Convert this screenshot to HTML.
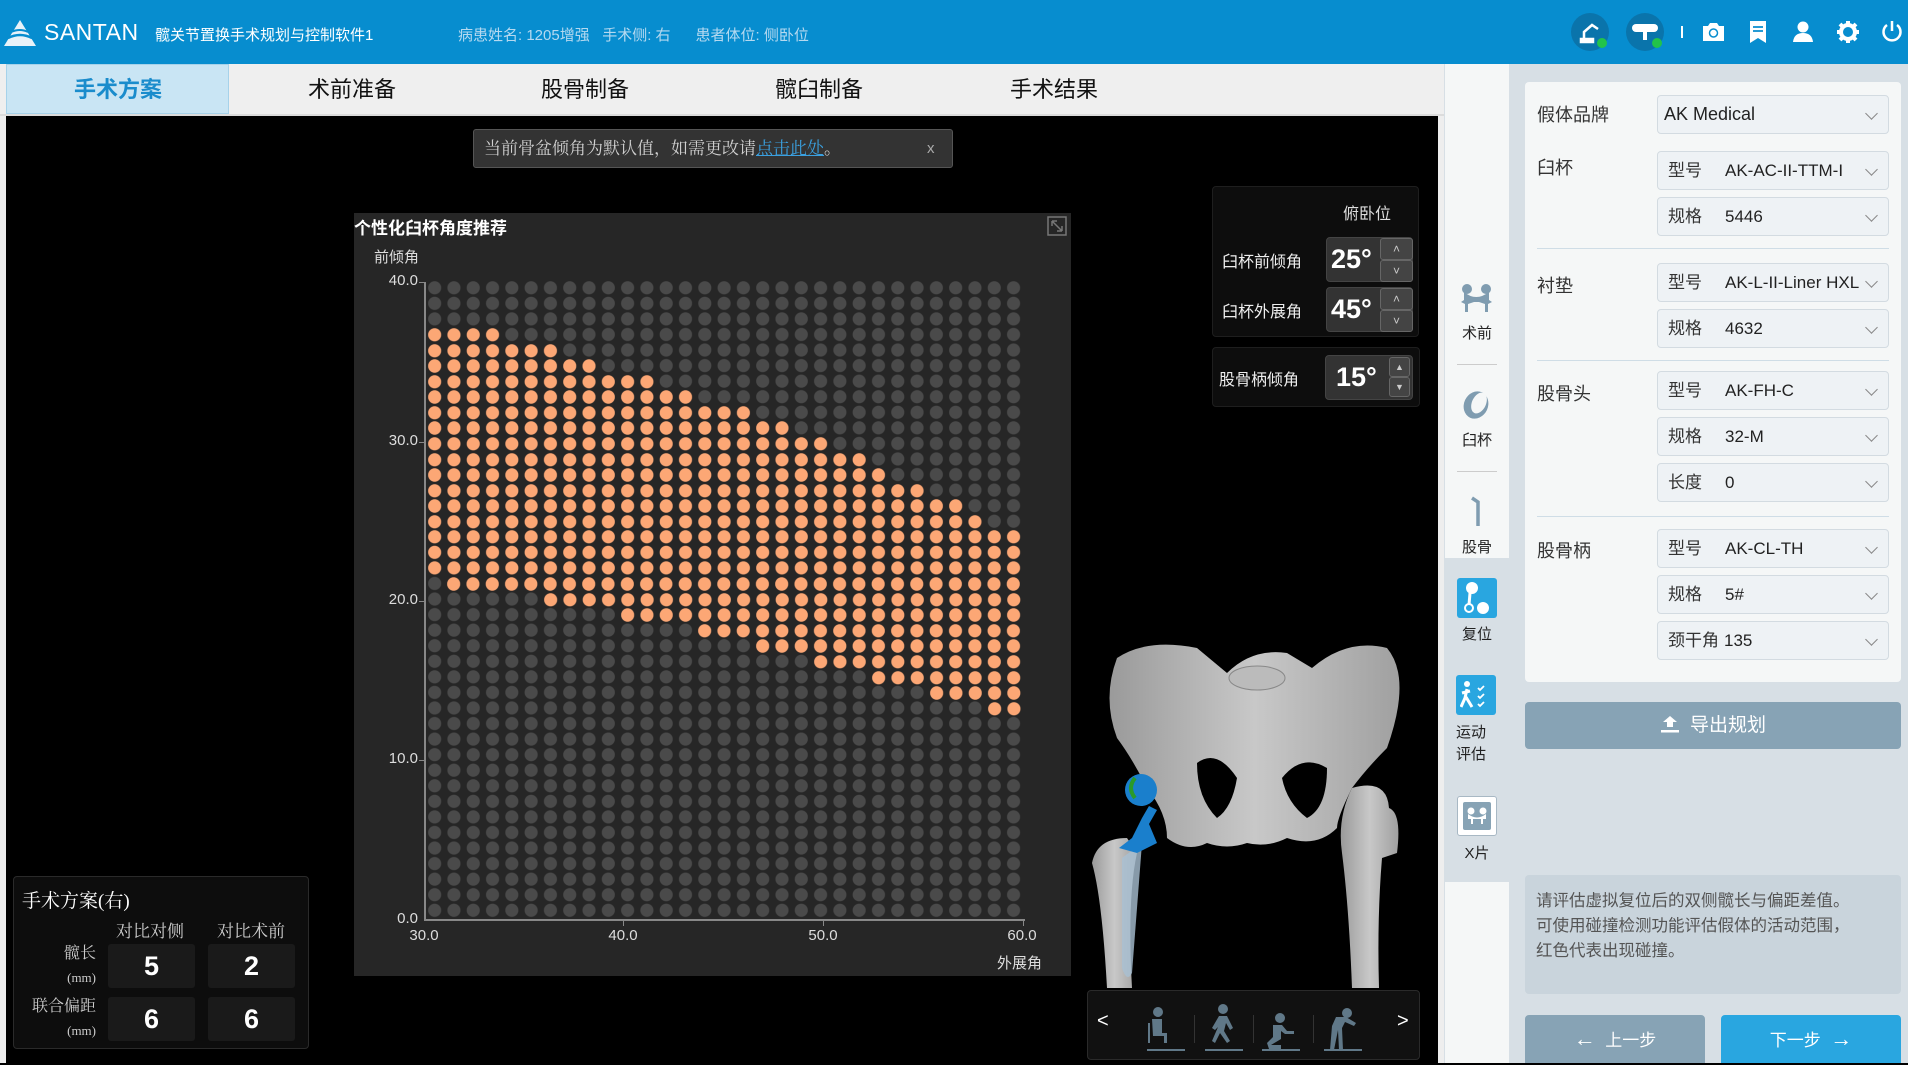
<!DOCTYPE html>
<html><head><meta charset="utf-8">
<style>
*{margin:0;padding:0;box-sizing:border-box}
body{width:1908px;height:1063px;overflow:hidden;position:relative;background:#000;font-family:"Liberation Sans","Noto Sans CJK SC",sans-serif}
.a{position:absolute}
.hdr{left:0;top:0;width:1908px;height:64px;background:#078dcf}
.tabs{left:0;top:64px;width:1444px;height:52px;background:#efefef;border-bottom:2px solid #dcdcdc}
.tab{position:absolute;top:0;height:50px;line-height:50px;font-size:22px;color:#111;text-align:center;width:230px}
.dd{position:absolute;left:1657px;width:232px;height:39px;background:#eef2f5;border:1px solid #d3dbe1;border-radius:4px;font-size:17px;color:#222;line-height:37px}
.dd .p{position:absolute;left:10px;color:#333}
.dd .v{position:absolute;left:67px}
.dd .c{position:absolute;right:12px;top:13px;width:9px;height:9px;border-right:1.5px solid #888;border-bottom:1.5px solid #888;transform:rotate(45deg)}
.lab{position:absolute;left:1537px;font-size:18px;color:#333}
.hr{position:absolute;left:1537px;width:352px;height:1px;background:#cfdde6}
.ylab{position:absolute;width:50px;text-align:right;font-size:15px;color:#ddd}
.xlab{position:absolute;width:50px;text-align:center;font-size:15px;color:#ddd}
.or{position:absolute;background:radial-gradient(circle at 50% 50%,#fca775 6.2px,#262626 6.9px);background-size:19.31px 15.57px}
.sl{position:absolute;left:1445px;width:64px;text-align:center;font-size:15px;color:#222}
.box{position:absolute;background:#333;border:1px solid #444;border-radius:4px;color:#fff;font-weight:bold;font-size:27px}
.st{position:absolute;background:#444;border:1px solid #666;border-radius:3px;color:#ccc;font-size:12px;text-align:center}
.cell{position:absolute;width:87px;height:44px;background:#1a1a1a;border-radius:3px;color:#fff;font-weight:bold;font-size:27px;text-align:center;line-height:44px}
.serif{font-family:"Liberation Serif","Noto Serif CJK SC",serif}
</style></head><body>
<!-- header -->
<div class="a hdr"></div>
<svg class="a" style="left:4px;top:20px" width="32" height="26" viewBox="0 0 32 26"><polygon points="16,0 32,26 0,26" fill="#e8f2f9"/><path d="M4 18 Q16 12 28 18" stroke="#078dcf" stroke-width="2.5" fill="none"/><path d="M7 12 Q16 8 24 12" stroke="#078dcf" stroke-width="2" fill="none"/></svg>
<div class="a" style="left:44px;top:19px;font-size:23px;color:#fff;letter-spacing:0.5px">SANTAN</div>
<div class="a" style="left:155px;top:24px;font-size:15px;color:#fff">髋关节置换手术规划与控制软件1</div>
<div class="a" style="left:458px;top:24px;font-size:15px;color:#b5d9f0;white-space:pre">病患姓名: 1205增强   手术侧: 右      患者体位: 侧卧位</div>
<div class="a" style="left:1571px;top:13px;width:38px;height:38px;border-radius:50%;background:#0a74ab"></div>
<svg class="a" style="left:1578px;top:20px" width="24" height="24" viewBox="0 0 24 24" fill="none" stroke="#fff" stroke-width="2.5"><path d="M6 20 L6 12 L14 5 L20 9"/><rect x="3" y="19" width="12" height="3" fill="#fff"/></svg>
<div class="a" style="left:1597px;top:38px;width:10px;height:10px;border-radius:50%;background:#22c34a"></div>
<div class="a" style="left:1626px;top:13px;width:38px;height:38px;border-radius:50%;background:#0a74ab"></div>
<div class="a" style="left:1632px;top:24px;width:26px;height:8px;border-radius:4px;background:#fff"></div>
<div class="a" style="left:1643px;top:31px;width:4px;height:9px;background:#fff"></div>
<div class="a" style="left:1652px;top:38px;width:10px;height:10px;border-radius:50%;background:#22c34a"></div>
<div class="a" style="left:1681px;top:26px;width:2px;height:12px;background:#fff"></div>
<svg class="a" style="left:1703px;top:22px" width="21" height="19" viewBox="0 0 21 19"><path d="M0 4 H5 L7 1 H14 L16 4 H21 V19 H0Z" fill="#fff"/><circle cx="10.5" cy="11" r="4" fill="none" stroke="#078dcf" stroke-width="1.5"/></svg>
<svg class="a" style="left:1750px;top:21px" width="16" height="22" viewBox="0 0 16 22"><path d="M0 0H16V22L8 17L0 22Z" fill="#fff"/><path d="M3 6H13M3 10H13" stroke="#078dcf" stroke-width="1.8"/></svg>
<svg class="a" style="left:1793px;top:21px" width="20" height="21" viewBox="0 0 20 21"><circle cx="10" cy="6" r="5.5" fill="#fff"/><path d="M0 21 Q1 12 10 12 Q19 12 20 21Z" fill="#fff"/></svg>
<svg class="a" style="left:1837px;top:21px" width="22" height="22" viewBox="0 0 22 22"><circle cx="11" cy="11" r="7" fill="none" stroke="#fff" stroke-width="4"/><g stroke="#fff" stroke-width="4"><path d="M11 0V5M11 17V22M0 11H5M17 11H22M3 3L6.5 6.5M15.5 15.5L19 19M3 19L6.5 15.5M15.5 6.5L19 3"/></g></svg>
<svg class="a" style="left:1881px;top:20px" width="22" height="23" viewBox="0 0 22 23"><path d="M6 5 A8.5 8.5 0 1 0 16 5" fill="none" stroke="#fff" stroke-width="2.5"/><path d="M11 1V11" stroke="#fff" stroke-width="2.5"/></svg>

<!-- tabs -->
<div class="a tabs"></div>
<div class="a" style="left:6px;top:64px;width:223px;height:50px;background:#c9e5f4;border:1px solid #a6d2ea"></div>
<div class="tab" style="left:3px;top:65px;color:#1a8ccc;font-weight:bold">手术方案</div>
<div class="tab" style="left:237px;top:65px">术前准备</div>
<div class="tab" style="left:470px;top:65px">股骨制备</div>
<div class="tab" style="left:704px;top:65px">髋臼制备</div>
<div class="tab" style="left:939px;top:65px">手术结果</div>
<div class="a" style="left:0;top:116px;width:6px;height:947px;background:#eeeeee"></div>
<div class="a" style="left:1438px;top:116px;width:6px;height:947px;background:#eeeeee"></div>

<!-- notification -->
<div class="a serif" style="left:473px;top:129px;width:480px;height:39px;background:#333;border:1px solid #555;border-radius:3px;font-size:17px;color:#d0d0d0;line-height:37px;padding-left:10px">当前骨盆倾角为默认值，如需更改请<span style="color:#3aa0e0;text-decoration:underline">点击此处</span>。<span style="position:absolute;left:453px;color:#aaa;font-family:'Liberation Sans';font-size:15px">x</span></div>

<!-- chart -->
<div class="a" style="left:354px;top:213px;width:717px;height:763px;background:#262626"></div>
<div class="a" style="left:354px;top:214px;font-size:17px;font-weight:bold;color:#fff">个性化臼杯角度推荐</div>
<svg class="a" style="left:1047px;top:216px" width="20" height="20" viewBox="0 0 20 20" fill="none" stroke="#777" stroke-width="1.5"><rect x="1" y="1" width="18" height="18"/><path d="M5 5L15 15M5 5H10M5 5V10M15 15H10M15 15V10"/></svg>
<div class="a" style="left:374px;top:246px;font-size:15px;color:#ddd">前倾角</div>
<div class="a" style="left:425px;top:280.2px;width:598.6px;height:638.4px;background:radial-gradient(circle at 50% 50%,#4a4a4a 6.2px,#262626 6.9px);background-size:19.31px 15.57px"></div>
<div class="or" style="left:425px;top:326.9px;width:77.2px;height:15.57px"></div>
<div class="or" style="left:425px;top:342.5px;width:135.2px;height:15.57px"></div>
<div class="or" style="left:425px;top:358.1px;width:173.8px;height:15.57px"></div>
<div class="or" style="left:425px;top:373.6px;width:231.7px;height:15.57px"></div>
<div class="or" style="left:425px;top:389.2px;width:270.3px;height:15.57px"></div>
<div class="or" style="left:425px;top:404.8px;width:328.3px;height:15.57px"></div>
<div class="or" style="left:425px;top:420.3px;width:366.9px;height:15.57px"></div>
<div class="or" style="left:425px;top:435.9px;width:405.5px;height:15.57px"></div>
<div class="or" style="left:425px;top:451.5px;width:444.1px;height:15.57px"></div>
<div class="or" style="left:425px;top:467.0px;width:463.4px;height:15.57px"></div>
<div class="or" style="left:425px;top:482.6px;width:502.1px;height:15.57px"></div>
<div class="or" style="left:425px;top:498.2px;width:540.7px;height:15.57px"></div>
<div class="or" style="left:425px;top:513.8px;width:560px;height:15.57px"></div>
<div class="or" style="left:425px;top:529.3px;width:598.6px;height:46.71px"></div>
<div class="or" style="left:444.31px;top:576.0px;width:579.3px;height:15.57px"></div>
<div class="or" style="left:540.86px;top:591.6px;width:482.8px;height:15.57px"></div>
<div class="or" style="left:618.1px;top:607.2px;width:405.5px;height:15.57px"></div>
<div class="or" style="left:695.34px;top:622.7px;width:328.3px;height:15.57px"></div>
<div class="or" style="left:753.27px;top:638.3px;width:270.3px;height:15.57px"></div>
<div class="or" style="left:811.2px;top:653.9px;width:212.4px;height:15.57px"></div>
<div class="or" style="left:869.13px;top:669.5px;width:154.5px;height:15.57px"></div>
<div class="or" style="left:927.06px;top:685.0px;width:96.6px;height:15.57px"></div>
<div class="or" style="left:984.99px;top:700.6px;width:38.6px;height:15.57px"></div>
<div class="a" style="left:424px;top:282px;width:2px;height:639px;background:#888"></div>
<div class="a" style="left:424px;top:919px;width:601px;height:2px;background:#888"></div>
<div class="a" style="left:419px;top:282px;width:5px;height:1px;background:#888"></div>
<div class="a" style="left:419px;top:442px;width:5px;height:1px;background:#888"></div>
<div class="a" style="left:419px;top:601px;width:5px;height:1px;background:#888"></div>
<div class="a" style="left:419px;top:760px;width:5px;height:1px;background:#888"></div>
<div class="a" style="left:623px;top:921px;width:1px;height:5px;background:#888"></div>
<div class="a" style="left:823px;top:921px;width:1px;height:5px;background:#888"></div>
<div class="a" style="left:1023px;top:921px;width:1px;height:5px;background:#888"></div>
<div class="ylab" style="left:368px;top:272px">40.0</div>
<div class="ylab" style="left:368px;top:432px">30.0</div>
<div class="ylab" style="left:368px;top:591px">20.0</div>
<div class="ylab" style="left:368px;top:750px">10.0</div>
<div class="ylab" style="left:368px;top:910px">0.0</div>
<div class="xlab" style="left:399px;top:927px">30.0</div>
<div class="xlab" style="left:598px;top:927px">40.0</div>
<div class="xlab" style="left:798px;top:927px">50.0</div>
<div class="xlab" style="left:997px;top:927px">60.0</div>
<div class="a" style="left:997px;top:952px;font-size:15px;color:#ddd">外展角</div>

<!-- angle panels -->
<div class="a" style="left:1212px;top:186px;width:207px;height:151px;background:#0d0d0d;border:1px solid #1e1e1e;border-radius:4px"></div>
<div class="a" style="left:1343px;top:200px;font-size:16px;color:#ddd">俯卧位</div>
<div class="a" style="left:1222px;top:248px;font-size:16px;color:#eee">臼杯前倾角</div>
<div class="box" style="left:1326px;top:237px;width:87px;height:45px;line-height:43px;padding-left:4px">25°</div>
<div class="st" style="left:1380px;top:238px;width:33px;height:22px;line-height:20px">˄</div>
<div class="st" style="left:1380px;top:260px;width:33px;height:22px;line-height:20px">˅</div>
<div class="a" style="left:1222px;top:298px;font-size:16px;color:#eee">臼杯外展角</div>
<div class="box" style="left:1326px;top:287px;width:87px;height:45px;line-height:43px;padding-left:4px">45°</div>
<div class="st" style="left:1380px;top:288px;width:33px;height:22px;line-height:20px">˄</div>
<div class="st" style="left:1380px;top:310px;width:33px;height:22px;line-height:20px">˅</div>
<div class="a" style="left:1212px;top:347px;width:208px;height:60px;background:#0d0d0d;border:1px solid #1e1e1e;border-radius:4px"></div>
<div class="a" style="left:1219px;top:366px;font-size:16px;color:#eee">股骨柄倾角</div>
<div class="box" style="left:1325px;top:355px;width:88px;height:45px;line-height:43px;padding-left:10px">15°</div>
<div class="st" style="left:1389px;top:357px;width:21px;height:20px;line-height:18px;font-size:9px">▲</div>
<div class="st" style="left:1389px;top:377px;width:21px;height:20px;line-height:18px;font-size:9px">▼</div>

<!-- pelvis -->
<svg class="a" style="left:1087px;top:638px" width="330" height="352" viewBox="0 0 330 352">
<defs><linearGradient id="g" x1="0" x2="1"><stop offset="0" stop-color="#9a9a9a"/><stop offset=".5" stop-color="#c8c8c8"/><stop offset="1" stop-color="#a0a0a0"/></linearGradient></defs>
<g fill="url(#g)">
<path d="M30 20 Q60 0 110 10 L140 35 Q165 10 200 15 L225 30 Q260 0 300 10 Q325 40 300 110 Q280 130 265 150 Q250 180 250 190 Q230 210 200 200 Q180 210 160 205 Q140 212 120 205 Q100 215 80 200 Q80 175 60 150 Q45 120 30 100 Q15 60 30 20Z"/>
<path d="M5 225 Q10 200 40 200 L50 215 Q40 260 45 350 L20 350 Q15 260 5 225Z"/>
<path d="M265 150 Q300 140 302 170 Q315 175 310 215 L295 220 Q290 280 292 350 L265 350 Q262 270 255 215 Q250 180 265 150Z"/>
</g>
<ellipse cx="170" cy="40" rx="28" ry="12" fill="#bbb" stroke="#888"/>
<path d="M110 125 Q130 110 150 140 Q145 170 130 180 Q110 160 110 125Z" fill="#000"/>
<path d="M195 140 Q215 115 240 130 Q240 170 220 180 Q200 165 195 140Z" fill="#000"/>
<path d="M35 220 L55 205 L45 335 Q40 345 35 330Z" fill="#a9c1d3" opacity=".8"/>
<circle cx="54" cy="152" r="16" fill="#1a7fcc"/>
<path d="M32 210 L45 200 L55 180 L62 168 L70 172 L62 186 L70 205 L50 215Z" fill="#1a7fcc"/>
<path d="M48 140 Q40 150 48 160" stroke="#2a9a2a" stroke-width="4" fill="none"/>
</svg>
<div class="a" style="left:1087px;top:990px;width:333px;height:70px;background:#111;border:1px solid #2a2a2a;border-radius:4px"></div>
<div class="a" style="left:1097px;top:1010px;color:#fff;font-size:20px">&lt;</div>
<div class="a" style="left:1397px;top:1010px;color:#fff;font-size:20px">&gt;</div>
<svg class="a" style="left:1130px;top:1003px" width="260" height="50" viewBox="0 0 260 50" fill="#607888">
<circle cx="28" cy="9" r="5"/><path d="M22 16h10v14h5v10h-3v-7h-11z"/><rect x="17" y="46" width="38" height="2"/><rect x="18" y="20" width="2" height="20"/>
<circle cx="93" cy="6" r="5"/><path d="M89 13l8 0 6 12-3 2-4-7-2 8 6 10-3 2-7-10-5 10-3-2 6-14-3 3-3-2z"/><rect x="75" y="46" width="38" height="2"/>
<circle cx="150" cy="15" r="5"/><path d="M143 22h9l5 6h7v3h-9l-4-3 0 8-10 6h10v4h-12l-2-6 6-6z"/><rect x="132" y="46" width="38" height="2"/>
<circle cx="217" cy="10" r="5"/><path d="M206 14h10l10 6-2 3-9-4-3 6 1 22h-4l-1-20-4 20h-4l2-24z"/><rect x="194" y="46" width="38" height="2"/>
<rect x="64" y="12" width="1" height="28" fill="#333"/><rect x="123" y="12" width="1" height="28" fill="#333"/><rect x="183" y="12" width="1" height="28" fill="#333"/>
</svg>

<!-- plan panel -->
<div class="a" style="left:13px;top:876px;width:296px;height:173px;background:#0d0d0d;border:1px solid #2a2a2a;border-radius:4px"></div>
<div class="a serif" style="left:22px;top:886px;font-size:19px;color:#fff">手术方案(右)</div>
<div class="a serif" style="left:116px;top:917px;font-size:17px;color:#ccc">对比对侧</div>
<div class="a serif" style="left:217px;top:917px;font-size:17px;color:#ccc">对比术前</div>
<div class="a serif" style="left:40px;top:942px;width:56px;text-align:right;font-size:16px;color:#ccc;line-height:24px">髋长<br><span style="font-size:13px">(mm)</span></div>
<div class="a serif" style="left:20px;top:995px;width:76px;text-align:right;font-size:16px;color:#ccc;line-height:24px">联合偏距<br><span style="font-size:13px">(mm)</span></div>
<div class="cell" style="left:108px;top:944px">5</div>
<div class="cell" style="left:208px;top:944px">2</div>
<div class="cell" style="left:108px;top:997px">6</div>
<div class="cell" style="left:208px;top:997px">6</div>

<!-- sidebar -->
<div class="a" style="left:1444px;top:64px;width:464px;height:999px;background:#d7dfe5"></div>
<div class="a" style="left:1445px;top:64px;width:64px;height:494px;background:#f5f7f7"></div>
<div class="a" style="left:1445px;top:882px;width:64px;height:181px;background:#f5f7f7"></div>
<svg class="a" style="left:1461px;top:284px" width="31" height="28" viewBox="0 0 31 28" fill="#7f9cb0"><circle cx="6" cy="5" r="5"/><circle cx="25" cy="5" r="5"/><path d="M3 8 Q15 18 28 8 L28 16 L31 18 L27 20 L27 28 L24 28 L24 20 L18 18 L13 18 L7 20 L7 28 L4 28 L4 20 L0 18 L3 16Z"/></svg>
<div class="sl" style="top:322px">术前</div>
<div class="a" style="left:1457px;top:364px;width:40px;height:1px;background:#ccc"></div>
<svg class="a" style="left:1462px;top:390px" width="28" height="30" viewBox="0 0 28 30"><ellipse cx="14" cy="15" rx="12" ry="14" fill="#7f9cb0" transform="rotate(25 14 15)"/><ellipse cx="17" cy="13" rx="7" ry="11" fill="#f5f7f7" transform="rotate(25 17 13)"/></svg>
<div class="sl" style="top:429px">臼杯</div>
<div class="a" style="left:1457px;top:471px;width:40px;height:1px;background:#ccc"></div>
<svg class="a" style="left:1470px;top:496px" width="14" height="32" viewBox="0 0 14 32"><path d="M2 2 L8 6 L8 30" stroke="#7f9cb0" stroke-width="3.5" fill="none"/></svg>
<div class="sl" style="top:536px">股骨</div>
<div class="a" style="left:1457px;top:578px;width:40px;height:40px;background:#29a6e0;border-radius:3px"></div>
<svg class="a" style="left:1461px;top:581px" width="32" height="34" viewBox="0 0 32 34" fill="#fff"><circle cx="11" cy="7" r="6"/><path d="M9 12 L8 24" stroke="#fff" stroke-width="3"/><circle cx="8" cy="27" r="4" fill="none" stroke="#fff" stroke-width="2"/><circle cx="22" cy="27" r="6"/></svg>
<div class="sl" style="top:623px">复位</div>
<div class="a" style="left:1456px;top:675px;width:40px;height:40px;background:#29a6e0;border-radius:3px"></div>
<svg class="a" style="left:1460px;top:680px" width="32" height="30" viewBox="0 0 32 30" fill="none" stroke="#fff" stroke-width="3"><circle cx="7" cy="4" r="3" fill="#fff" stroke="none"/><path d="M7 9 L5 18 L1 27 M6 17 L12 27 M2 13 L10 11"/><path d="M18 8l2 2 4-4M18 16l2 2 4-4M18 24l2 2 4-4" stroke-width="1.8"/></svg>
<div class="a" style="left:1456px;top:722px;font-size:15px;color:#222;line-height:22px">运动<br>评估</div>
<div class="a" style="left:1457px;top:796px;width:40px;height:40px;background:#fff;border:1px solid #a8b8c4;border-radius:3px"></div>
<div class="a" style="left:1463px;top:802px;width:28px;height:28px;background:#87a3b5;border-radius:2px"></div>
<svg class="a" style="left:1466px;top:806px" width="22" height="20" viewBox="0 0 22 20" fill="#fff"><circle cx="5" cy="5" r="3.5"/><circle cx="17" cy="5" r="3.5"/><path d="M2 8 Q11 15 20 8 L20 13 L17 13 L17 18 L15 18 L15 13 L7 13 L7 18 L5 18 L5 13 L2 13Z"/></svg>
<div class="sl" style="top:842px">X片</div>

<!-- right card -->
<div class="a" style="left:1525px;top:82px;width:376px;height:600px;background:#f5f7f7;border-radius:4px"></div>
<div class="lab" style="top:101px">假体品牌</div>
<div class="dd" style="top:95px"><span class="p" style="left:6px;font-size:18px;color:#222">AK Medical</span><span class="c"></span></div>
<div class="lab" style="top:154px">臼杯</div>
<div class="dd" style="top:151px"><span class="p">型号</span><span class="v">AK-AC-II-TTM-I</span><span class="c"></span></div>
<div class="dd" style="top:197px"><span class="p">规格</span><span class="v">5446</span><span class="c"></span></div>
<div class="hr" style="top:248px"></div>
<div class="lab" style="top:272px">衬垫</div>
<div class="dd" style="top:263px"><span class="p">型号</span><span class="v">AK-L-II-Liner HXL</span><span class="c"></span></div>
<div class="dd" style="top:309px"><span class="p">规格</span><span class="v">4632</span><span class="c"></span></div>
<div class="hr" style="top:360px"></div>
<div class="lab" style="top:380px">股骨头</div>
<div class="dd" style="top:371px"><span class="p">型号</span><span class="v">AK-FH-C</span><span class="c"></span></div>
<div class="dd" style="top:417px"><span class="p">规格</span><span class="v">32-M</span><span class="c"></span></div>
<div class="dd" style="top:463px"><span class="p">长度</span><span class="v">0</span><span class="c"></span></div>
<div class="hr" style="top:516px"></div>
<div class="lab" style="top:537px">股骨柄</div>
<div class="dd" style="top:529px"><span class="p">型号</span><span class="v">AK-CL-TH</span><span class="c"></span></div>
<div class="dd" style="top:575px"><span class="p">规格</span><span class="v">5#</span><span class="c"></span></div>
<div class="dd" style="top:621px"><span class="p">颈干角</span><span class="v" style="left:66px">135</span><span class="c"></span></div>

<div class="a" style="left:1525px;top:702px;width:376px;height:47px;background:#87a3b5;border-radius:4px;color:#fff;font-size:19px;text-align:center;line-height:47px"><svg width="20" height="18" viewBox="0 0 20 18" style="vertical-align:-2px;margin-right:10px"><path d="M10 1 L17 7 H13 V12 H7 V7 H3Z" fill="#fff"/><rect x="1" y="15" width="18" height="2.5" fill="#fff"/></svg>导出规划</div>
<div class="a" style="left:1525px;top:875px;width:376px;height:119px;background:#c9d4dc;border-radius:4px;color:#555;font-size:16.5px;line-height:25px;padding:14px 0 0 11px">请评估虚拟复位后的双侧髋长与偏距差值。<br>可使用碰撞检测功能评估假体的活动范围，<br>红色代表出现碰撞。</div>
<div class="a" style="left:1525px;top:1015px;width:180px;height:48px;background:#87a3b5;border-radius:4px 4px 0 0;color:#fff;font-size:17px;text-align:center;line-height:48px"><span style="font-size:22px">←</span>&nbsp; 上一步</div>
<div class="a" style="left:1721px;top:1015px;width:180px;height:48px;background:#29a6e0;border-radius:4px 4px 0 0;color:#fff;font-size:17px;text-align:center;line-height:48px">下一步 &nbsp;<span style="font-size:22px">→</span></div>
</body></html>
